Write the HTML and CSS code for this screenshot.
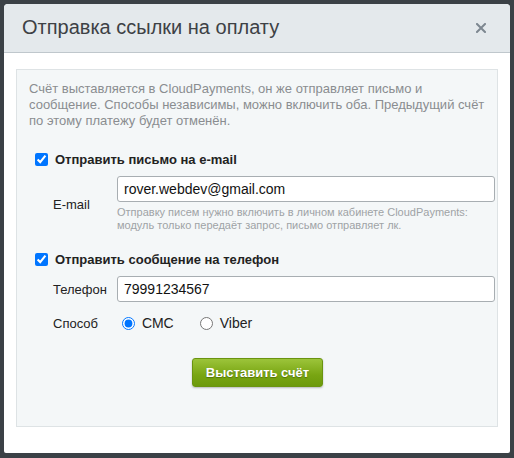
FILE: index.html
```html
<!DOCTYPE html>
<html lang="ru">
<head>
<meta charset="utf-8">
<title>Отправка ссылки на оплату</title>
<link rel="stylesheet" href="styles.css">
</head>
<body>
<div class="dialog">
  <div class="header">
    <div class="title">Отправка ссылки на оплату</div>
    <span class="close" aria-label="Закрыть">
      <svg width="10" height="10" viewBox="0 0 10 10"><path d="M1 1L9 9M9 1L1 9" stroke="#7d8790" stroke-width="2" stroke-linecap="square"/></svg>
    </span>
  </div>
  <div class="content">
    <div class="box">
      <div class="info">Счёт выставляется в CloudPayments, он же отправляет письмо и сообщение. Способы независимы, можно включить оба. Предыдущий счёт по этому платежу будет отменён.</div>

      <label class="check-row first">
        <input type="checkbox" checked>
        <span>Отправить письмо на e-mail</span>
      </label>
      <div class="form-row email-row">
        <div class="field-label">E-mail</div>
        <div class="field">
          <input class="text-input" type="text" value="rover.webdev@gmail.com">
          <div class="hint">Отправку писем нужно включить в личном кабинете CloudPayments: модуль только передаёт запрос, письмо отправляет лк.</div>
        </div>
      </div>

      <label class="check-row second">
        <input type="checkbox" checked>
        <span>Отправить сообщение на телефон</span>
      </label>
      <div class="form-row phone-row">
        <div class="field-label">Телефон</div>
        <div class="field">
          <input class="text-input" type="text" value="79991234567">
        </div>
      </div>
      <div class="form-row method-row">
        <div class="field-label">Способ</div>
        <div class="field radios">
          <label class="radio"><input type="radio" name="m" checked><span>СМС</span></label>
          <label class="radio"><input type="radio" name="m"><span>Viber</span></label>
        </div>
      </div>

      <div class="actions">
        <button class="submit" type="button">Выставить счёт</button>
      </div>
    </div>
  </div>
</div>
</body>
</html>
```

FILE: styles.css
```css
html, body {
  margin: 0;
  padding: 0;
}
body {
  background: #3b4146;
  width: 514px;
  height: 458px;
  overflow: hidden;
  font-family: "Liberation Sans", Arial, sans-serif;
}
.dialog {
  margin: 4px;
  width: 506px;
  height: 449px;
  background: #fff;
  border-radius: 4px 4px 2px 2px;
  overflow: hidden;
}
.header {
  height: 48px;
  background: #e4e9ec;
  border-bottom: 1px solid #bfc7cc;
  display: flex;
  align-items: center;
  justify-content: space-between;
  padding: 0 24px 0 18px;
}
.title {
  font-size: 20px;
  color: #3d4145;
  margin-top: -1px;
}
.close {
  display: flex;
  width: 10px;
  height: 10px;
}
.content {
  padding: 16px 12px 0 12px;
}
.box {
  height: 358px;
  box-sizing: border-box;
  border: 1px solid #dee3e5;
  background: #f4f7f8;
}
.info {
  padding: 11px 12px 0 12px;
  font-size: 13px;
  line-height: 16px;
  color: #8a8d90;
}
.check-row {
  display: flex;
  align-items: center;
  height: 16px;
  padding-left: 18px;
  font-size: 13px;
  font-weight: bold;
  color: #222;
}
.check-row input {
  margin: 0 7px 0 0;
  width: 13px;
  height: 13px;
}
.check-row.first { margin-top: 22px; }
.check-row.second { margin-top: 19px; }
.form-row {
  display: grid;
  grid-template-columns: 64px 1fr;
  align-items: center;
  padding: 0 2px 0 36px;
}
.field-label {
  font-size: 13px;
  color: #222;
}
.email-row { margin-top: 9px; }
.phone-row { margin-top: 9px; }
.method-row { margin-top: 11px; height: 20px; }
.text-input {
  display: block;
  width: 100%;
  box-sizing: border-box;
  height: 26px;
  border: 1px solid #a8aeb2;
  border-radius: 3px;
  padding: 0 6px;
  font-family: "Liberation Sans", Arial, sans-serif;
  font-size: 14px;
  color: #111;
  background: #fff;
  outline: none;
}
.hint {
  margin-top: 4px;
  font-size: 11px;
  line-height: 13px;
  color: #9fa3a6;
}
.radios {
  display: flex;
  align-items: center;
  gap: 26px;
  padding-left: 5px;
}
.radio {
  display: flex;
  align-items: center;
  font-size: 14px;
  color: #222;
}
.radio input {
  margin: 0 7px 0 0;
  width: 13px;
  height: 13px;
}
.actions {
  display: flex;
  justify-content: center;
  margin-top: 25px;
}
.submit {
  width: 131px;
  height: 29px;
  border: 1px solid #6a9410;
  border-radius: 3px;
  background: linear-gradient(#9cc43a, #78a512 60%, #6c9a0b);
  color: #fff;
  font-family: "Liberation Sans", Arial, sans-serif;
  font-size: 13px;
  font-weight: bold;
  text-shadow: 0 1px 1px rgba(60, 80, 0, 0.6);
  box-shadow: 0 1px 2px rgba(0, 0, 0, 0.25);
  padding: 0;
  margin-left: 1px;
}
```
